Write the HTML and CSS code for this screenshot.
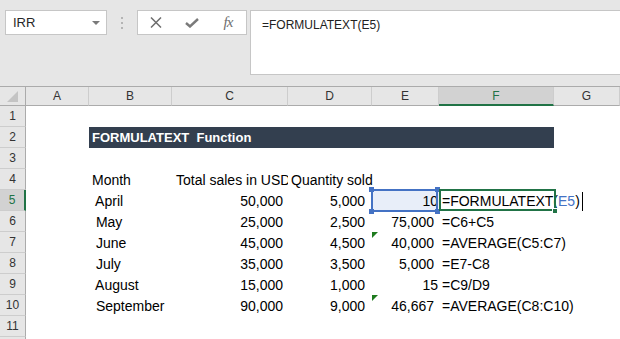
FILE: index.html
```html
<!DOCTYPE html>
<html>
<head>
<meta charset="utf-8">
<link rel="stylesheet" href="styles.css">
</head>
<body>
<div class="toolbar">
  <div class="namebox"><span>IRR</span><span class="caret"></span></div>
  <div class="grip"><i></i><i></i><i></i></div>
  <div class="btns">
    <span class="slot"><svg width="12" height="11" viewBox="0 0 12 11"><path d="M1 0.5 L11 10.5 M11 0.5 L1 10.5" stroke="#6e6e6e" stroke-width="1.5" fill="none"/></svg></span>
    <span class="slot"><svg width="14" height="10" viewBox="0 0 14 10"><path d="M1 5 L5 8.5 L13 1" stroke="#7a7a7a" stroke-width="2.4" fill="none"/></svg></span>
    <span class="slot fx">fx</span>
  </div>
  <div class="formula">=FORMULATEXT(E5)</div>
</div>
<div class="sheet">
  <div class="ch corner"><svg width="13" height="13" viewBox="0 0 13 13"><path d="M12 1 L12 12 L1 12 Z" fill="#c4c4c4"/></svg></div>
  <div class="ch">A</div><div class="ch">B</div><div class="ch">C</div><div class="ch">D</div><div class="ch">E</div><div class="ch ch-sel">F</div><div class="ch">G</div>

  <div class="rh">1</div><div></div><div></div><div></div><div></div><div></div><div></div><div></div>

  <div class="rh">2</div><div></div><div class="title">FORMULATEXT&nbsp; Function</div><div></div>

  <div class="rh">3</div><div></div><div></div><div></div><div></div><div></div><div></div><div></div>

  <div class="rh">4</div><div></div><div class="c">Month</div><div class="c clip hd">Total sales in USD</div><div class="c">Quantity sold</div><div></div><div></div><div></div>

  <div class="rh rh-sel">5</div><div></div><div class="c m"> April</div><div class="c r cc">50,000</div><div class="c r cd">5,000</div>
  <div class="c r ce1 sel">10<span class="box"></span><span class="k k1"></span><span class="k k2"></span><span class="k k3"></span><span class="k k4"></span></div>
  <div class="c f act">=FORMULATEXT(<span class="ref">E5</span>)<span class="caretline"></span><span class="gbox"></span><span class="handle"></span></div><div></div>

  <div class="rh">6</div><div></div><div class="c m"> May</div><div class="c r cc">25,000</div><div class="c r cd">2,500</div><div class="c r ce">75,000</div><div class="c f">=C6+C5</div><div></div>

  <div class="rh">7</div><div></div><div class="c m"> June</div><div class="c r cc">45,000</div><div class="c r cd">4,500</div><div class="c r ce err">40,000</div><div class="c f">=AVERAGE(C5:C7)</div><div></div>

  <div class="rh">8</div><div></div><div class="c m"> July</div><div class="c r cc">35,000</div><div class="c r cd">3,500</div><div class="c r ce">5,000</div><div class="c f">=E7-C8</div><div></div>

  <div class="rh">9</div><div></div><div class="c m"> August</div><div class="c r cc">15,000</div><div class="c r cd">1,000</div><div class="c r ce1">15</div><div class="c f">=C9/D9</div><div></div>

  <div class="rh">10</div><div></div><div class="c m"> September</div><div class="c r cc">90,000</div><div class="c r cd">9,000</div><div class="c r ce err">46,667</div><div class="c f">=AVERAGE(C8:C10)</div><div></div>

  <div class="rh">11</div><div></div><div></div><div></div><div></div><div></div><div></div><div></div>

  <div class="rh"></div><div></div><div></div><div></div><div></div><div></div><div></div><div></div>
</div>
</body>
</html>
```
FILE: styles.css
```css
* { box-sizing: border-box; }
html, body { margin: 0; padding: 0; }
body {
  width: 620px;
  height: 339px;
  overflow: hidden;
  background: #e6e6e6;
  font-family: "Liberation Sans", Arial, sans-serif;
}

.toolbar {
  display: flex;
  align-items: flex-start;
  height: 86px;
  padding: 10px 0 0 5px;
}
.namebox {
  width: 102px;
  height: 25px;
  background: #fff;
  border: 1px solid #c6c6c6;
  display: flex;
  align-items: center;
  justify-content: space-between;
  padding: 0 6px 0 7px;
  font-size: 13px;
  color: #262626;
}
.caret {
  width: 0;
  height: 0;
  border-left: 4px solid transparent;
  border-right: 4px solid transparent;
  border-top: 4px solid #7a7a7a;
}
.grip {
  width: 30px;
  height: 25px;
  display: flex;
  flex-direction: column;
  align-items: center;
  gap: 3px;
  padding-top: 7px;
}
.grip i {
  display: block;
  width: 2px;
  height: 2px;
  background: #b4b4b4;
}
.btns {
  width: 110px;
  height: 25px;
  background: #fff;
  border: 1px solid #c6c6c6;
  display: flex;
  align-items: center;
}
.slot {
  width: 36px;
  display: flex;
  justify-content: center;
  align-items: center;
}
.fx {
  font-family: "Liberation Serif", serif;
  font-style: italic;
  font-size: 15px;
  color: #6e6e6e;
  letter-spacing: -1px;
}
.formula {
  flex: 1;
  margin-left: 3px;
  margin-right: -2px;
  height: 65px;
  background: #fff;
  border: 1px solid #c6c6c6;
  padding: 7px 0 0 11px;
  font-size: 12px;
  line-height: 14px;
  color: #222;
}

.sheet {
  background: #fff;
  border-top: 1px solid #ababab;
  display: grid;
  grid-template-columns: 26px 63px 83px 116px 84px 67px 115px 66px;
  grid-template-rows: 19px repeat(12, 21px);
}
.ch {
  background: #e6e6e6;
  border-right: 1px solid #cdcdcd;
  border-bottom: 1px solid #ababab;
  text-align: center;
  font-size: 12px;
  line-height: 18px;
  color: #333;
}
.corner {
  border-right: 1px solid #ababab;
  display: flex;
  justify-content: center;
  align-items: flex-end;
  padding-bottom: 2px;
}
.ch-sel {
  background: #d2d2d2;
  color: #217346;
  border-bottom: 2px solid #217346;
}
.rh {
  background: #e6e6e6;
  border-right: 1px solid #ababab;
  border-bottom: 1px solid #cdcdcd;
  text-align: center;
  font-size: 12px;
  line-height: 20px;
  color: #333;
}
.rh-sel {
  background: #d2d2d2;
  color: #217346;
  border-right: 2px solid #217346;
}
.title {
  grid-column: 3 / 8;
  background: #333f4f;
  color: #fff;
  font-weight: bold;
  font-size: 13px;
  line-height: 21px;
  padding-left: 3px;
  white-space: nowrap;
}
.c {
  position: relative;
  font-size: 14px;
  line-height: 21px;
  padding-top: 1px;
  white-space: pre;
  padding-left: 3px;
  padding-right: 3px;
  color: #000;
}
.clip { overflow: hidden; }
.hd { padding-left: 4px; }
.r { text-align: right; }
.cc { padding-right: 5px; }
.cd { padding-right: 7px; }
.ce { padding-right: 5px; }
.ce1 { padding-right: 1px; }
.f { padding-left: 3px; }

.sel { background: #e8eef9; }
.box {
  position: absolute;
  top: -1px;
  left: -1px;
  right: 1px;
  bottom: -1px;
  border: 2px solid #4472c4;
}
.k {
  position: absolute;
  width: 5px;
  height: 5px;
  background: #4472c4;
}
.k1 { left: -3px; top: -3px; }
.k2 { right: -1px; top: -3px; }
.k3 { left: -3px; bottom: -3px; }
.k4 { right: -1px; bottom: -3px; }

.ref { color: #4472c4; }
.caretline {
  display: inline-block;
  width: 1px;
  height: 19px;
  background: #000;
  margin-left: 2px;
  vertical-align: -5px;
}
.gbox {
  position: absolute;
  top: -1px;
  left: 0;
  right: -2px;
  bottom: 0;
  border: 2px solid #217346;
}
.handle {
  position: absolute;
  right: -4px;
  bottom: -3px;
  background: #217346;
  border: 1px solid #fff;
  box-sizing: content-box;
  width: 4px;
  height: 4px;
}
.err::before {
  content: "";
  position: absolute;
  left: 0;
  top: 0;
  border-top: 6px solid #1e7b1e;
  border-right: 6px solid transparent;
}
```
